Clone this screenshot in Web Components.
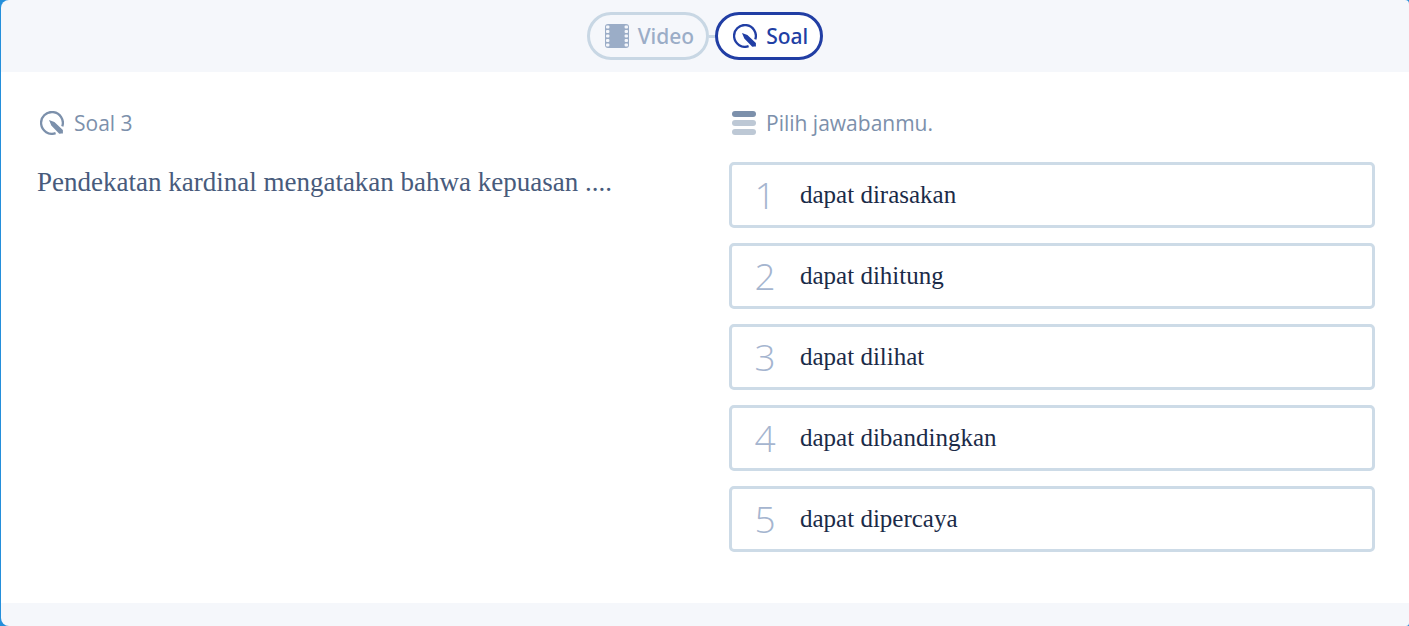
<!DOCTYPE html>
<html lang="id">
<head>
<meta charset="utf-8">
<title>Soal 3</title>
<style>
  body {
    margin: 0;
    background: #248fdb;
    font-family: 'Open Sans', sans-serif;
    --serif: 'Liberation Serif', serif;
    --bar: #f5f7fb;
    --border: #cddbe7;
    --muted: #7c90ab;
    --active: #213ea4;
  }
</style>
</head>
<body>
<quiz-page>
  <quiz-nav slot="nav">
    <nav-step icon="film">Video</nav-step>
    <nav-step icon="pencil" active>Soal</nav-step>
  </quiz-nav>
  <quiz-panel slot="question" icon="pencil" heading="Soal 3">
    <quiz-question>Pendekatan kardinal mengatakan bahwa kepuasan ....</quiz-question>
  </quiz-panel>
  <quiz-panel slot="answers" icon="list" heading="Pilih jawabanmu.">
    <answer-option number="1">dapat dirasakan</answer-option>
    <answer-option number="2">dapat dihitung</answer-option>
    <answer-option number="3">dapat dilihat</answer-option>
    <answer-option number="4">dapat dibandingkan</answer-option>
    <answer-option number="5">dapat dipercaya</answer-option>
  </quiz-panel>
</quiz-page>

<script>
(function() {
    'use strict';

const ICONS = {
    film: `
      <rect width="24" height="24" rx="3" fill="currentColor"/>
      <g fill="var(--bar)">
        <rect x="1" y="1.5" width="3.4" height="3" rx="1"/><rect x="19.6" y="1.5" width="3.4" height="3" rx="1"/>
        <rect x="1" y="6" width="3.4" height="3" rx="1"/><rect x="19.6" y="6" width="3.4" height="3" rx="1"/>
        <rect x="1" y="10.5" width="3.4" height="3" rx="1"/><rect x="19.6" y="10.5" width="3.4" height="3" rx="1"/>
        <rect x="1" y="15" width="3.4" height="3" rx="1"/><rect x="19.6" y="15" width="3.4" height="3" rx="1"/>
        <rect x="1" y="19.5" width="3.4" height="3" rx="1"/><rect x="19.6" y="19.5" width="3.4" height="3" rx="1"/>
      </g>`,
    pencil: `
      <path d="M15.6 22.2A10.9 10.9 0 1 1 22.3 15.4" fill="none" stroke="currentColor" stroke-width="2.3"/>
      <path d="M9 9L14.4 11L22.6 18.8Q23.2 19.6 22.9 20.4V22.6H20.7Q19.8 23.2 19 22.4L11.3 14.4Z" fill="currentColor"/>`,
    list: `
      <rect width="24" height="6" rx="3" fill="currentColor"/>
      <rect y="9" width="24" height="6" rx="3" fill="#bdc8d5"/>
      <rect y="18" width="24" height="6" rx="3" fill="#bdc8d5"/>`
};

class UiIcon extends HTMLElement {
    connectedCallback() {
        if (!this.shadowRoot) this.attachShadow({ mode: 'open' });
        this.shadowRoot.innerHTML = `
      <style>
        :host { display: block; flex: none; width: 24px; height: 24px; }
        svg { display: block; }
      </style>
      <svg width="24" height="24" viewBox="0 0 24 24" aria-hidden="true">${ICONS[this.getAttribute('name')]}</svg>
    `;
    }
}

customElements.define('ui-icon', UiIcon);

class NavStep extends HTMLElement {
    connectedCallback() {
        if (!this.shadowRoot) this.attachShadow({ mode: 'open' });
        this.shadowRoot.innerHTML = `
      <style>
        :host { display: block; }
        button {
          box-sizing: border-box;
          display: flex;
          align-items: center;
          gap: 9px;
          height: 48px;
          padding: 0 12px 0 15px;
          border: 3px solid #c8d7e4;
          border-radius: 24px;
          background: transparent;
          color: #9badc7;
          font: 500 21px/30px 'Noto Sans', sans-serif;
          cursor: pointer;
        }
        :host([active]) button {
          border-color: var(--active);
          background: #ffffff;
          color: var(--active);
        }
      </style>
      <button type="button"><ui-icon name="${this.getAttribute('icon')}"></ui-icon><slot></slot></button>
    `;
    }
}

customElements.define('nav-step', NavStep);

class QuizNav extends HTMLElement {
    connectedCallback() {
        if (!this.shadowRoot) this.attachShadow({ mode: 'open' });
        // the gradient is the short line that joins the two steps
        this.shadowRoot.innerHTML = `
      <style>
        :host { display: block; }
        nav {
          display: flex;
          gap: 6px;
          background: linear-gradient(#c8d7e4, #c8d7e4) center / 40px 3px no-repeat;
        }
        ::slotted(nav-step:first-child) { background: var(--bar); border-radius: 24px; }
      </style>
      <nav><slot></slot></nav>
    `;
    }
}

customElements.define('quiz-nav', QuizNav);

class QuizPanel extends HTMLElement {
    connectedCallback() {
        if (!this.shadowRoot) this.attachShadow({ mode: 'open' });
        this.shadowRoot.innerHTML = `
      <style>
        :host { display: block; }
        h2 {
          display: flex;
          align-items: center;
          gap: 10px;
          margin: 0 0 24px;
          padding-left: 3px;
          color: var(--muted);
          font-size: 21px;
          font-weight: 400;
          line-height: 30px;
        }
        .content { display: flex; flex-direction: column; gap: 15px; }
      </style>
      <h2><ui-icon name="${this.getAttribute('icon')}"></ui-icon>${this.getAttribute('heading')}</h2>
      <div class="content"><slot></slot></div>
    `;
    }
}

customElements.define('quiz-panel', QuizPanel);

class QuizQuestion extends HTMLElement {
    connectedCallback() {
        if (!this.shadowRoot) this.attachShadow({ mode: 'open' });
        this.shadowRoot.innerHTML = `
      <style>
        :host { display: block; }
        p {
          margin: 0;
          color: #485b7c;
          font-family: var(--serif);
          font-size: 27px;
          line-height: 40px;
        }
      </style>
      <p><slot></slot></p>
    `;
    }
}

customElements.define('quiz-question', QuizQuestion);

class AnswerOption extends HTMLElement {
    connectedCallback() {
        if (!this.shadowRoot) this.attachShadow({ mode: 'open' });
        this.shadowRoot.innerHTML = `
      <style>
        :host { display: block; }
        button {
          box-sizing: border-box;
          display: flex;
          align-items: center;
          gap: 24px;
          width: 100%;
          height: 66px;
          padding: 0 22px;
          border: 3px solid var(--border);
          border-radius: 5px;
          background: #ffffff;
          color: #1b2b48;
          font: 25px/36px var(--serif);
          text-align: left;
          cursor: pointer;
        }
        button:hover { border-color: #9badc7; }
        .number {
          width: 22px;
          color: #a5b5cf;
          font: 300 37px/52px 'Open Sans', sans-serif;
          text-align: center;
        }
      </style>
      <button type="button"><span class="number">${this.getAttribute('number')}</span><span><slot></slot></span></button>
    `;
    }
}

customElements.define('answer-option', AnswerOption);

class QuizPage extends HTMLElement {
    connectedCallback() {
        if (!this.shadowRoot) this.attachShadow({ mode: 'open' });
        this.shadowRoot.innerHTML = `
      <style>
        :host {
          display: flex;
          flex-direction: column;
          min-height: 100vh;
          margin-left: 1px;
          border-radius: 8px 4px 3px 8px;
          overflow: hidden;
          background: var(--bar);
        }
        header { display: flex; justify-content: center; padding: 12px 0; }
        main {
          flex: 1;
          display: grid;
          grid-template-columns: 1fr 1fr;
          background: #ffffff;
        }
        section { padding: 36px 34px 36px 24px; }
        section:first-child { padding-left: 36px; }
        footer { height: 23px; }
      </style>
      <header><slot name="nav"></slot></header>
      <main>
        <section><slot name="question"></slot></section>
        <section><slot name="answers"></slot></section>
      </main>
      <footer></footer>
    `;
    }
}

customElements.define('quiz-page', QuizPage);

})();
</script>
</body>
</html>
